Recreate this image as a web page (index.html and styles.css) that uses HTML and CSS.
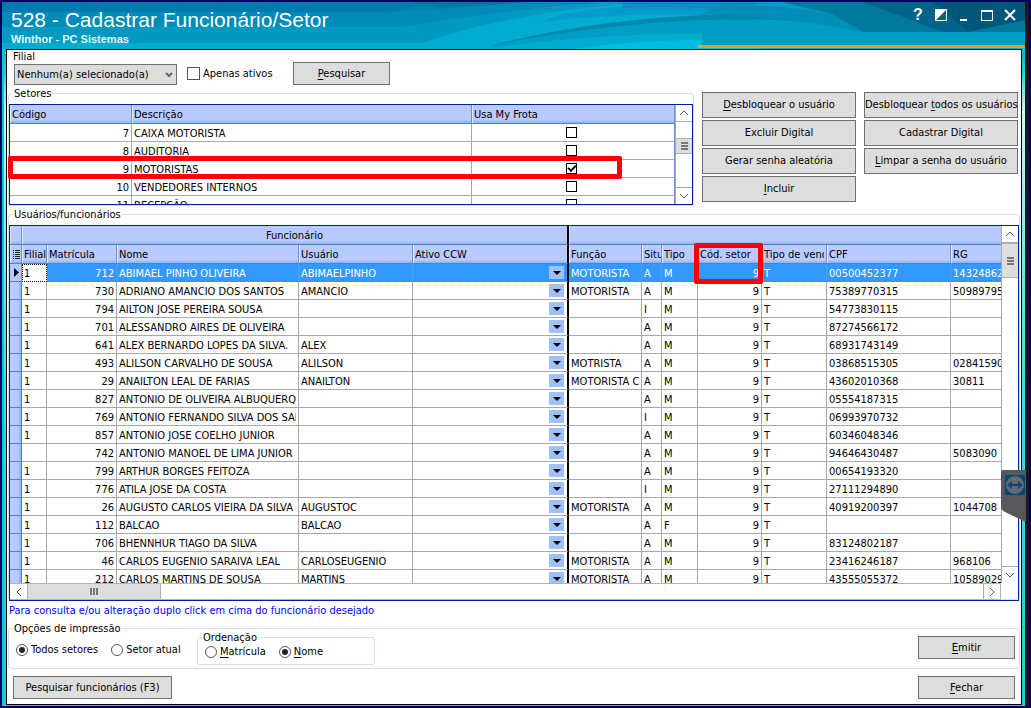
FILE: index.html
```html
<!DOCTYPE html>
<html lang="pt-BR">
<head>
<meta charset="utf-8">
<title>528 - Cadastrar Funcionário/Setor</title>
<link rel="stylesheet" href="styles.css">
</head>
<body>
<div class="frame">
<div class="window">
  <header class="titlebar">
    <svg class="waves" viewBox="0 0 1023 47" preserveAspectRatio="none" aria-hidden="true">
      <rect width="1023" height="47" fill="#00acd0"/>
      <path d="M0 0H640Q500 12 420 41H0z" fill="#0099bf"/>
      <path d="M0 0H600Q500 8 400 25H0z" fill="#008bb8"/>
      <path d="M0 10H390Q460 6 520 0H420z" fill="#0086ac"/>
      <path d="M0 0H430L390 10H0z" fill="#0079ae"/>
      <path d="M410 0H530Q470 4 440 6z" fill="#007898"/>
      <path d="M560 12Q620 2 700 0H1023V30H820Q760 14 700 13Q620 10 540 20z" fill="#009ccc"/>
      <path d="M620 0H760L740 8Q680 4 620 6z" fill="#008fbe"/>
      <path d="M490 43Q590 18 704 13Q770 12 860 30H1023V47H490z" fill="#009ec2"/>
      <path d="M490 43Q590 18 704 13Q780 11 840 22Q740 14 660 20Q580 26 490 43z" fill="#0087ae"/>
      <path d="M480 47Q600 30 720 32H1023V47z" fill="#00add0"/>
      <path d="M570 47Q640 36 760 38V47z" fill="#00bce0"/>
      <path d="M720 2Q790 4 830 12L862 30Q780 14 700 12z" fill="#008db8"/>
      <path d="M780 0H1023V30H862L830 12z" fill="#00799c"/>
      <path d="M860 0H930L966 30H940Q900 14 860 0z" fill="#00648a"/>
      <path d="M930 0H1023V18L966 30z" fill="#005878"/>
      <path d="M700 30H1023V44H700z" fill="#009dc2"/>
    </svg>
    <div class="titles">
      <h1>528 - Cadastrar Funcionário/Setor</h1>
      <p>Winthor - PC Sistemas</p>
    </div>
    <div class="winbtns">
      <button type="button" aria-label="Ajuda">?</button>
      <button type="button" aria-label="Alternar"><svg width="12" height="12" viewBox="0 0 12 12"><path d="M.5.5h11v11H.5z" fill="none" stroke="#fff"/><path d="M0 0h12L0 12z" fill="#fff"/></svg></button>
      <button type="button" aria-label="Minimizar"><svg width="12" height="12" viewBox="0 0 12 12"><path d="M2 10h7v2H2z" fill="#fff"/></svg></button>
      <button type="button" aria-label="Maximizar"><svg width="12" height="12" viewBox="0 0 12 12"><path d="M0 1h12v11H0zM1 3v8h10V3z" fill="#fff" fill-rule="evenodd"/></svg></button>
      <button type="button" aria-label="Fechar janela"><svg width="12" height="12" viewBox="0 0 12 12"><path d="M1 1l10 10M11 1L1 11" stroke="#fff" stroke-width="2"/></svg></button>
    </div>
    <div class="accent"></div>
  </header>

  <main class="content">
    <div class="top">
      <div class="left">
        <form class="filter">
          <div class="field">
            <label for="filial">Filial</label>
            <div class="selectbox">
              <select id="filial"><option>Nenhum(a) selecionado(a)</option></select>
              <svg class="chev" width="8" height="6" viewBox="0 0 8 6"><path d="M1 1l3 3 3-3" fill="none" stroke="#666" stroke-width="2"/></svg>
            </div>
          </div>
          <label class="check"><input type="checkbox">Apenas ativos</label>
          <button type="button" class="btn std"><u>P</u>esquisar</button>
        </form>

        <fieldset class="group setores">
          <legend>Setores</legend>
          <div class="grid">
            <div class="gridmain">
              <div class="clip">
                <table>
                  <colgroup><col class="s-cod"><col class="s-desc"><col></colgroup>
                  <thead><tr class="heads"><th>Código</th><th>Descrição</th><th>Usa My Frota</th></tr></thead>
                  <tbody>
                    <tr><td class="num">7</td><td>CAIXA MOTORISTA</td><td class="mid"><input type="checkbox" aria-label="Usa My Frota 7"></td></tr>
                    <tr><td class="num">8</td><td>AUDITORIA</td><td class="mid"><input type="checkbox" aria-label="Usa My Frota 8"></td></tr>
                    <tr><td class="num">9</td><td>MOTORISTAS</td><td class="mid"><input type="checkbox" checked aria-label="Usa My Frota 9"></td></tr>
                    <tr><td class="num">10</td><td>VENDEDORES INTERNOS</td><td class="mid"><input type="checkbox" aria-label="Usa My Frota 10"></td></tr>
                    <tr><td class="num">11</td><td>RECEPÇÃO</td><td class="mid"><input type="checkbox" aria-label="Usa My Frota 11"></td></tr>
                  </tbody>
                </table>
              </div>
            </div>
            <div class="vscroll">
              <button type="button" aria-label="Subir"><svg width="10" height="6" viewBox="0 0 10 6"><path d="M1 5l4-4 4 4"/></svg></button>
              <div class="track"><div class="thumb"><i></i><i></i><i></i></div></div>
              <button type="button" aria-label="Descer"><svg width="10" height="6" viewBox="0 0 10 6"><path d="M1 1l4 4 4-4"/></svg></button>
            </div>
            <div class="mark row-mark"></div>
          </div>
        </fieldset>
      </div>
      <div class="actions">
        <button type="button" class="btn"><u>D</u>esbloquear o usuário</button>
        <button type="button" class="btn">Desbloquear <u>t</u>odos os usuários</button>
        <button type="button" class="btn">Excluir Digital</button>
        <button type="button" class="btn">Cadastrar Digital</button>
        <button type="button" class="btn">Gerar senha aleatória</button>
        <button type="button" class="btn"><u>L</u>impar a senha do usuário</button>
        <button type="button" class="btn"><u>I</u>ncluir</button>
      </div>
    </div>

    <fieldset class="group usuarios">
      <legend>Usuários/funcionários</legend>
      <div class="grid">
        <div class="gridmain">
          <div class="clip">
            <table>
              <colgroup><col class="u-sel"><col class="u-fil"><col class="u-mat"><col class="u-nom"><col class="u-usr"><col class="u-ccw"><col class="u-fun"><col class="u-sit"><col class="u-tip"><col class="u-set"><col class="u-ven"><col class="u-cpf"><col></colgroup>
              <thead>
                <tr class="bands"><th></th><th colspan="5" class="split">Funcionário</th><th colspan="7"></th></tr>
                <tr class="heads"><th class="rowhead"><svg width="8" height="9" viewBox="0 0 8 9"><path d="M0 .5h1M0 2.5h1M0 4.5h1M0 6.5h1M0 8.5h1M2 .5h5M2 2.5h5M2 4.5h5M2 6.5h5M2 8.5h5" stroke="#222"/></svg></th><th class="tight">Filial</th><th>Matrícula</th><th>Nome</th><th>Usuário</th><th class="split">Ativo CCW</th><th>Função</th><th class="tight">Situ</th><th>Tipo</th><th>Cód. setor</th><th>Tipo de vend</th><th>CPF</th><th>RG</th></tr>
              </thead>
              <tbody>
                <tr class="selected"><td class="rowhead"><svg width="5" height="9" viewBox="0 0 5 9"><path d="M0 0l5 4.500L0 9z"/></svg></td><td class="focus">1</td><td class="num">712</td><td>ABIMAEL PINHO OLIVEIRA</td><td>ABIMAELPINHO</td><td class="split"><button type="button" class="drop" aria-label="Ativo CCW"></button></td><td>MOTORISTA</td><td>A</td><td>M</td><td class="num">9</td><td>T</td><td>00500452377</td><td>14324862</td></tr>
                <tr><td class="rowhead"></td><td>1</td><td class="num">730</td><td>ADRIANO AMANCIO DOS SANTOS</td><td>AMANCIO</td><td class="split"><button type="button" class="drop" aria-label="Ativo CCW"></button></td><td>MOTORISTA</td><td>A</td><td>M</td><td class="num">9</td><td>T</td><td>75389770315</td><td>50989795</td></tr>
                <tr><td class="rowhead"></td><td>1</td><td class="num">794</td><td>AILTON JOSE PEREIRA SOUSA</td><td></td><td class="split"><button type="button" class="drop" aria-label="Ativo CCW"></button></td><td></td><td>I</td><td>M</td><td class="num">9</td><td>T</td><td>54773830115</td><td></td></tr>
                <tr><td class="rowhead"></td><td>1</td><td class="num">701</td><td>ALESSANDRO AIRES DE OLIVEIRA</td><td></td><td class="split"><button type="button" class="drop" aria-label="Ativo CCW"></button></td><td></td><td>A</td><td>M</td><td class="num">9</td><td>T</td><td>87274566172</td><td></td></tr>
                <tr><td class="rowhead"></td><td>1</td><td class="num">641</td><td>ALEX BERNARDO LOPES DA SILVA.</td><td>ALEX</td><td class="split"><button type="button" class="drop" aria-label="Ativo CCW"></button></td><td></td><td>A</td><td>M</td><td class="num">9</td><td>T</td><td>68931743149</td><td></td></tr>
                <tr><td class="rowhead"></td><td>1</td><td class="num">493</td><td>ALILSON CARVALHO DE SOUSA</td><td>ALILSON</td><td class="split"><button type="button" class="drop" aria-label="Ativo CCW"></button></td><td>MOTRISTA</td><td>A</td><td>M</td><td class="num">9</td><td>T</td><td>03868515305</td><td>02841590</td></tr>
                <tr><td class="rowhead"></td><td>1</td><td class="num">29</td><td>ANAILTON LEAL DE FARIAS</td><td>ANAILTON</td><td class="split"><button type="button" class="drop" aria-label="Ativo CCW"></button></td><td>MOTORISTA C</td><td>A</td><td>M</td><td class="num">9</td><td>T</td><td>43602010368</td><td>30811</td></tr>
                <tr><td class="rowhead"></td><td>1</td><td class="num">827</td><td>ANTONIO DE OLIVEIRA ALBUQUERQ</td><td></td><td class="split"><button type="button" class="drop" aria-label="Ativo CCW"></button></td><td></td><td>A</td><td>M</td><td class="num">9</td><td>T</td><td>05554187315</td><td></td></tr>
                <tr><td class="rowhead"></td><td>1</td><td class="num">769</td><td>ANTONIO FERNANDO SILVA DOS SAN</td><td></td><td class="split"><button type="button" class="drop" aria-label="Ativo CCW"></button></td><td></td><td>I</td><td>M</td><td class="num">9</td><td>T</td><td>06993970732</td><td></td></tr>
                <tr><td class="rowhead"></td><td>1</td><td class="num">857</td><td>ANTONIO JOSE COELHO JUNIOR</td><td></td><td class="split"><button type="button" class="drop" aria-label="Ativo CCW"></button></td><td></td><td>A</td><td>M</td><td class="num">9</td><td>T</td><td>60346048346</td><td></td></tr>
                <tr><td class="rowhead"></td><td></td><td class="num">742</td><td>ANTONIO MANOEL DE LIMA JUNIOR</td><td></td><td class="split"><button type="button" class="drop" aria-label="Ativo CCW"></button></td><td></td><td>A</td><td>M</td><td class="num">9</td><td>T</td><td>94646430487</td><td>5083090</td></tr>
                <tr><td class="rowhead"></td><td>1</td><td class="num">799</td><td>ARTHUR BORGES FEITOZA</td><td></td><td class="split"><button type="button" class="drop" aria-label="Ativo CCW"></button></td><td></td><td>A</td><td>M</td><td class="num">9</td><td>T</td><td>00654193320</td><td></td></tr>
                <tr><td class="rowhead"></td><td>1</td><td class="num">776</td><td>ATILA JOSE DA COSTA</td><td></td><td class="split"><button type="button" class="drop" aria-label="Ativo CCW"></button></td><td></td><td>I</td><td>M</td><td class="num">9</td><td>T</td><td>27111294890</td><td></td></tr>
                <tr><td class="rowhead"></td><td>1</td><td class="num">26</td><td>AUGUSTO CARLOS VIEIRA DA SILVA</td><td>AUGUSTOC</td><td class="split"><button type="button" class="drop" aria-label="Ativo CCW"></button></td><td>MOTORISTA</td><td>A</td><td>M</td><td class="num">9</td><td>T</td><td>40919200397</td><td>1044708</td></tr>
                <tr><td class="rowhead"></td><td>1</td><td class="num">112</td><td>BALCAO</td><td>BALCAO</td><td class="split"><button type="button" class="drop" aria-label="Ativo CCW"></button></td><td></td><td>A</td><td>F</td><td class="num">9</td><td>T</td><td></td><td></td></tr>
                <tr><td class="rowhead"></td><td>1</td><td class="num">706</td><td>BHENNHUR TIAGO DA SILVA</td><td></td><td class="split"><button type="button" class="drop" aria-label="Ativo CCW"></button></td><td></td><td>A</td><td>M</td><td class="num">9</td><td>T</td><td>83124802187</td><td></td></tr>
                <tr><td class="rowhead"></td><td>1</td><td class="num">46</td><td>CARLOS EUGENIO SARAIVA LEAL</td><td>CARLOSEUGENIO</td><td class="split"><button type="button" class="drop" aria-label="Ativo CCW"></button></td><td>MOTORISTA</td><td>A</td><td>M</td><td class="num">9</td><td>T</td><td>23416246187</td><td>968106</td></tr>
                <tr><td class="rowhead"></td><td>1</td><td class="num">212</td><td>CARLOS MARTINS DE SOUSA</td><td>MARTINS</td><td class="split"><button type="button" class="drop" aria-label="Ativo CCW"></button></td><td>MOTORISTA</td><td>A</td><td>M</td><td class="num">9</td><td>T</td><td>43555055372</td><td>10589029</td></tr>
              </tbody>
            </table>
          </div>
          <div class="hscroll">
            <button type="button" aria-label="Esquerda"><svg width="6" height="10" viewBox="0 0 6 10"><path d="M5 1L1 5l4 4"/></svg></button>
            <div class="track"><div class="thumb"><i></i><i></i><i></i></div></div>
            <button type="button" aria-label="Direita"><svg width="6" height="10" viewBox="0 0 6 10"><path d="M1 1l4 4-4 4"/></svg></button>
          </div>
        </div>
        <div class="vscroll tall">
          <button type="button" aria-label="Subir"><svg width="10" height="6" viewBox="0 0 10 6"><path d="M1 5l4-4 4 4"/></svg></button>
          <div class="track"><div class="thumb"><i></i><i></i><i></i></div></div>
          <button type="button" aria-label="Descer"><svg width="10" height="6" viewBox="0 0 10 6"><path d="M1 1l4 4 4-4"/></svg></button>
        </div>
        <div class="mark cell-mark"></div>
      </div>
    </fieldset>

    <p class="note">Para consulta e/ou alteração duplo click em cima do funcionário desejado</p>

    <fieldset class="group opcoes">
      <legend>Opções de impressão</legend>
      <div class="optrow">
        <div class="radios">
          <label><input type="radio" name="escopo" checked>Todos setores</label>
          <label><input type="radio" name="escopo">Setor atual</label>
        </div>
        <fieldset class="group ordem">
          <legend>Ordenação</legend>
          <div class="radios">
            <label><input type="radio" name="ordem"><span><u>M</u>atrícula</span></label>
            <label><input type="radio" name="ordem" checked><span><u>N</u>ome</span></label>
          </div>
        </fieldset>
        <button type="button" class="btn std end"><u>E</u>mitir</button>
      </div>
    </fieldset>

    <footer class="bottom">
      <button type="button" class="btn wide">Pesquisar funcionários (F3)</button>
      <button type="button" class="btn std end"><u>F</u>echar</button>
    </footer>
  </main>
</div>
<button type="button" class="remote" aria-label="Acesso remoto">
  <svg width="25" height="53" viewBox="0 0 25 53"><path d="M2 0H25V52L4 42Q0 40 0 37V2Q0 0 2 0z" fill="#58585a"/><path d="M4 5h20v20H4z" fill="#004878"/><circle cx="14" cy="15" r="9" fill="#646a70"/><path d="M6 15l5-4v3h6v-3l5 4-5 4v-3h-6v3z" fill="#004878"/></svg>
</button>
</div>
</body>
</html>
```
FILE: styles.css
```css
* { box-sizing: border-box; }
body {
  margin: 0;
  background: #00005c;
  font: 11px/14px "DejaVu Sans Condensed", "DejaVu Sans", "Noto Sans", sans-serif;
  color: #000;
}
button, select, input { font: inherit; color: inherit; margin: 0; padding: 0; }
button { border: 0; background: none; }
h1, p { margin: 0; }
u { text-underline-offset: 2px; }

.frame { position: relative; height: 100vh; padding: 2px; }
.window {
  display: flex;
  flex-direction: column;
  height: 100%;
  padding: 0 3px 1px 4px;
  border-right: 4px solid #1a1a1e;
  background: linear-gradient(90deg, #0cc 0, #0cc 2px, transparent 2px),
    linear-gradient(#00acd0 40px, #28d0e0 70px, #c8fcfc 110px, #8ef0f4 200px, #38dce4 400px, #28c8dc 100%);
}

/* title bar */
.titlebar {
  position: relative;
  display: flex;
  justify-content: space-between;
  flex: none;
  height: 47px;
  margin: 0 -3px 0 -4px;
  padding: 0 9px;
  color: #fff;
}
.waves { position: absolute; inset: 0; width: 100%; height: 100%; }
.titles { position: relative; padding-top: 6px; }
.titles h1 { font: 21px/24px "Liberation Sans", sans-serif; }
.titles p { font: bold 11px/14px "Liberation Sans", sans-serif; color: #e4fbff; }
.winbtns { position: relative; display: flex; align-items: center; gap: 11px; height: 26px; }
.winbtns button { display: flex; width: 12px; height: 18px; align-items: center; justify-content: center; color: #fff; font: bold 16px/18px "Liberation Sans", sans-serif; }
.accent { position: absolute; right: 0; bottom: 1px; width: 32%; height: 3px; background: #f99c0a; }

/* panel */
.content {
  display: flex;
  flex-direction: column;
  flex: 1;
  min-height: 0;
  padding: 1px 1px 4px;
  border: 1px solid #000;
  background: #fff;
}
.btn { height: 26px; border: 1px solid #707070; background: #ddd; text-align: center; white-space: nowrap; }
.std { width: 97px; height: 23px; }
.wide { width: 159px; height: 23px; }
.end { margin-left: auto; }

.top { display: flex; gap: 8px; }
.left { flex: 1; min-width: 0; }
.filter { display: flex; align-items: flex-end; height: 34px; padding-left: 5px; }
.field { display: flex; flex-direction: column; }
.field label { line-height: 14px; }
.selectbox { position: relative; width: 163px; height: 21px; margin-left: 1px; }
.selectbox select { display: block; width: 100%; height: 100%; padding-left: 2px; border: 1px solid #707070; border-radius: 0; background: #ddd; appearance: none; }
.chev { position: absolute; right: 4px; top: 8px; }
.check { display: flex; align-items: center; gap: 3px; width: 106px; height: 23px; margin-left: 10px; white-space: nowrap; }
.check input { appearance: none; width: 13px; height: 13px; border: 1px solid #555; background: #fff; }

.group { position: relative; min-width: 0; margin: 0; padding: 0; border: 1px solid #dadaea; border-radius: 3px; }
.group > legend { padding: 1px 1px 0; margin-left: 4px; line-height: 15px; }
.actions { display: grid; grid-template-columns: 154px 154px; grid-auto-rows: 26px; gap: 2px 8px; align-content: start; padding: 41px 2px 0 0; }

/* data grids */
.grid { position: relative; display: flex; border: 1px solid #00209a; }
.gridmain { display: flex; flex: 1; flex-direction: column; min-width: 0; }
.clip { flex: 1; min-height: 0; overflow: hidden; }
table { width: 100%; table-layout: fixed; border-collapse: separate; border-spacing: 0; }
th, td { height: 18px; padding: 1px 2px 0; overflow: clip; overflow-clip-margin: content-box; white-space: nowrap; line-height: 16px; text-align: left; font-weight: normal; }
td { padding-top: 2px; line-height: 15px; border-right: 1px solid #a8a8a8; border-bottom: 1px solid #a8a8a8; background: #fff; }
th { height: 19px; background: linear-gradient(#b9cafe 15px, #86b4ea); border-bottom: 1px solid #4f83c9; border-right: 1px solid #6a92d4; box-shadow: inset 1px 0 #dfe8ff; }
th.tight { padding-right: 0; }
th:last-child, td:last-child { padding-right: 0; border-right: 0; }
.setores th:last-child, .setores td:last-child { border-right: 1px solid #6a92d4; }
td.num { text-align: right; }
.setores td.mid { padding: 0 4px 0 0; }
td.mid input { display: block; appearance: none; width: 11px; height: 11px; margin: 0 auto; border: 1px solid #000; background: #fff; }
td.mid input:checked::after { content: ""; display: block; width: 6px; height: 3px; margin: 1px; border: solid #000; border-width: 0 0 2px 2px; rotate: -45deg; }
td.rowhead { padding: 0 0 0 4px; background: linear-gradient(90deg, #b9cafe 8px, #86b4ea); border-color: #4f83c9; }
th.rowhead { padding: 0 0 0 3px; }
.rowhead svg { display: block; }
.split { border-right: 2px solid #000; }
.bands th { text-align: center; }
.selected td { background: #3399ff; color: #fff; border-right-color: #4ba2f4; border-bottom: 1px dotted #b8733a; }
.selected td.rowhead { background: #b9cafe; color: #000; border-bottom: 1px solid #4f83c9; }
.selected td.focus { border: 1px dotted #000; background: #fff; color: #000; padding: 1px 1px 0; }
.selected td.split { border-right-color: #000; }
td.split { padding: 0; border-right-color: #000; }
.drop { display: flex; align-items: center; justify-content: center; width: 15px; height: 13px; margin: 0 3px 0 auto; background: #9fc0ff; }
.drop::after { content: ""; border: solid transparent; border-width: 4px 4px 0; border-top-color: #000; }
.s-cod { width: 122px; }
.s-desc { width: 340px; }
.u-sel { width: 12px; }
.u-fil { width: 25px; }
.u-mat { width: 70px; }
.u-nom { width: 182px; }
.u-usr { width: 114px; }
.u-ccw { width: 156px; }
.u-fun { width: 73px; }
.u-sit { width: 20px; }
.u-tip { width: 36px; }
.u-set { width: 64px; }
.u-ven { width: 65px; }
.u-cpf { width: 124px; }

/* scroll bars */
.vscroll { display: flex; flex-direction: column; width: 17px; border-left: 1px solid #aaa; background: #fff; }
.vscroll button, .hscroll button { display: flex; align-items: center; justify-content: center; width: 16px; height: 17px; flex: none; }
.vscroll button:first-child { border-bottom: 1px solid #aaa; }
.vscroll button:last-child { border-top: 1px solid #aaa; }
.vscroll path, .hscroll path { fill: none; stroke: #555; stroke-width: 1px; }
.track { flex: 1; }
.vscroll .thumb { display: flex; flex-direction: column; gap: 1px; align-items: center; justify-content: center; height: 16px; margin-top: 16px; background: #ddd; border: solid #b0b0b0; border-width: 1px 0; }
.vscroll i { width: 7px; height: 2px; background: #777; }
.tall .thumb { height: 35px; margin-top: 0; }
.tall { margin-bottom: 17px; }
.hscroll { display: flex; flex: none; height: 17px; border: solid #b4b4b4; border-width: 1px 1px 1px 0; }
.hscroll button { width: 17px; height: 15px; }
.hscroll button:last-child { border-left: 1px solid #aaa; }
.hscroll .thumb { display: flex; gap: 1px; align-items: center; justify-content: center; width: 14%; height: 15px; background: #ddd; border: solid #b0b0b0; border-width: 0 1px; }
.hscroll i { width: 2px; height: 7px; background: #777; }

.setores .grid { height: 101px; margin-top: 3px; }
.usuarios { display: flex; flex: 1; flex-direction: column; min-height: 0; }
.usuarios .grid { height: calc(100vh - 332px); margin-top: 3px; }

/* annotations */
.mark { position: absolute; border: 5px solid #f00; border-radius: 2px; pointer-events: none; }
.row-mark { left: -2px; top: 51px; width: 614px; height: 23px; }
.cell-mark { left: 684px; top: 17px; width: 69px; height: 41px; }

/* footer */
.note { padding: 4px 0 2px 1px; color: #00f; }
.opcoes { height: 49px; flex: none; }
.optrow { display: flex; align-items: flex-start; padding-right: 4px; }
.optrow > .radios { width: 188px; padding: 7px 0 0 7px; }
.radios { display: flex; gap: 13px; }
.radios label { display: flex; align-items: center; gap: 3px; white-space: nowrap; }
.radios input { display: grid; place-items: center; appearance: none; width: 12px; height: 12px; border: 1px solid #555; border-radius: 50%; background: #fff; }
.radios input:checked::after { content: ""; width: 6px; height: 6px; border-radius: 50%; background: #222; }
.ordem { width: 178px; height: 36px; margin-top: -7px; }
.ordem .radios { padding: 0 0 0 7px; }
.bottom { display: flex; padding: 7px 5px 1px; flex: none; }

.remote { position: absolute; right: 5px; top: 470px; width: 25px; height: 53px; }
.remote svg { display: block; }
```
